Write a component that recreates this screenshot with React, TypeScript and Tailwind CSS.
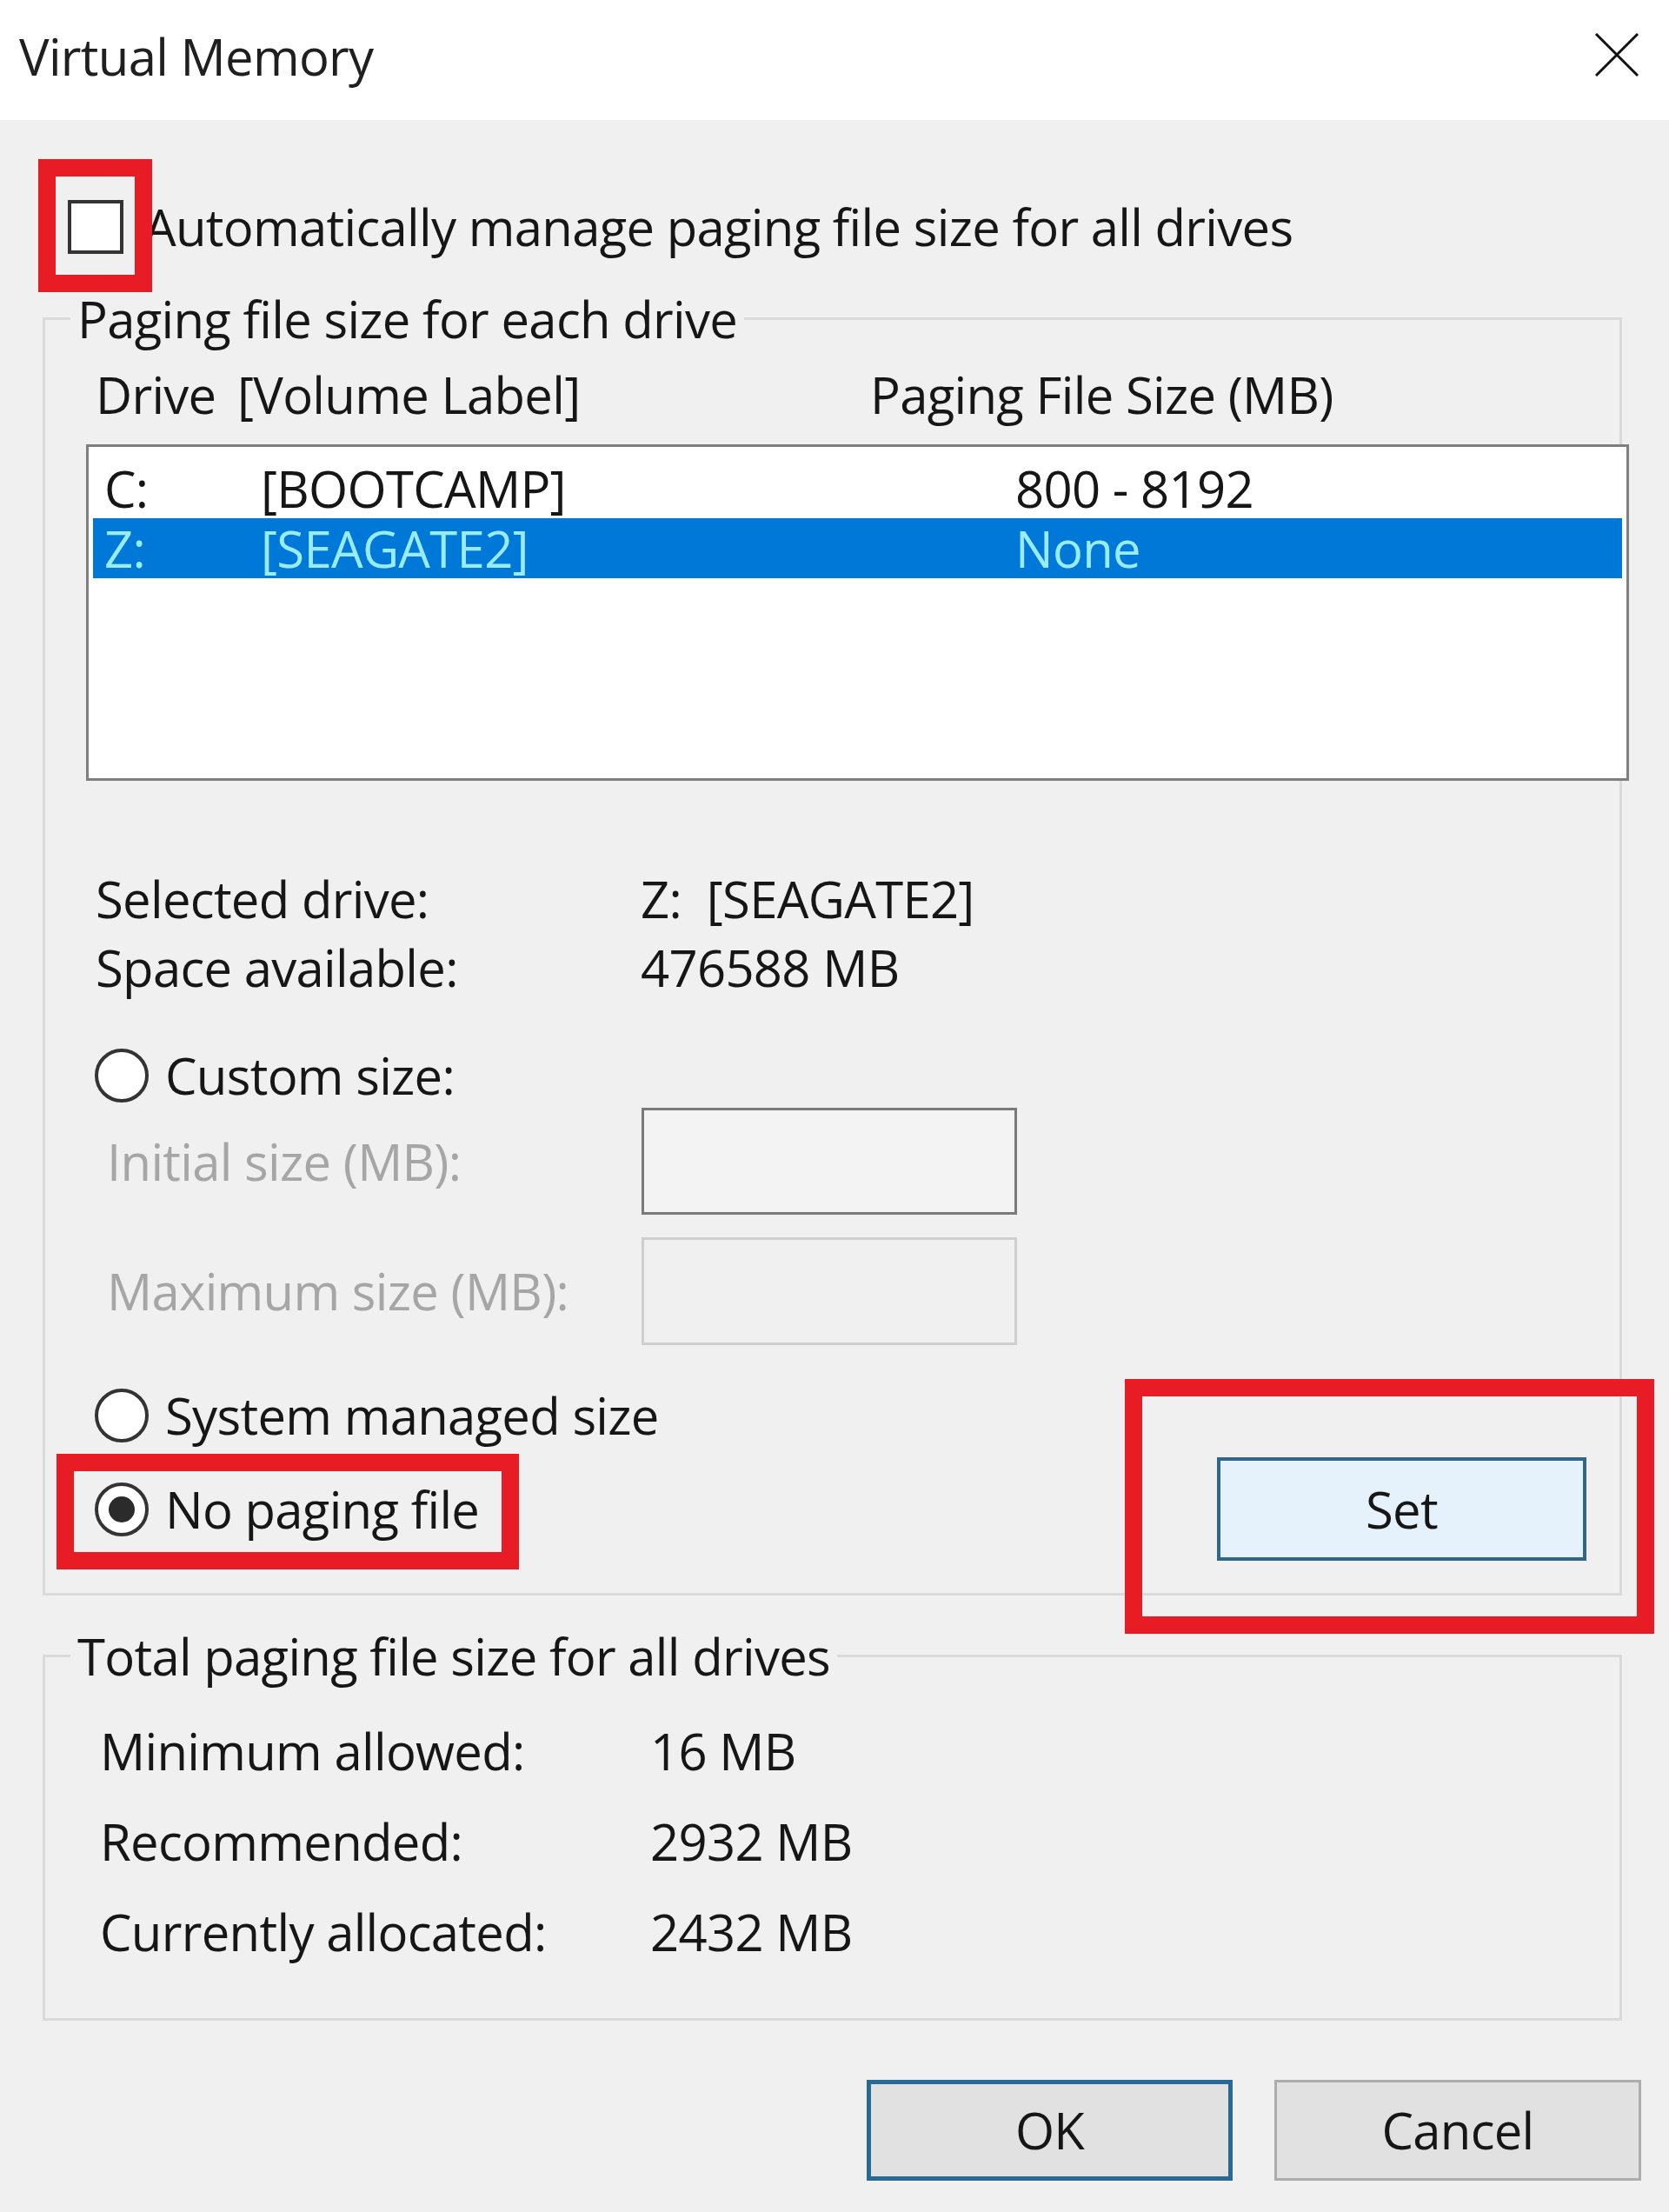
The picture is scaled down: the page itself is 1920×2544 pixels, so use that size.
import React from "react";

function Radio({ checked }: { checked?: boolean }) {
  return (
    <div className="w-[62px] h-[62px] rounded-full border-[4px] border-[#333333] bg-white flex items-center justify-center shrink-0">
      {checked && <div className="w-[30px] h-[30px] rounded-full bg-[#2b2b2b]" />}
    </div>
  );
}

function GroupTitle({ children }: { children: React.ReactNode }) {
  return (
    <div className="mt-[-33px] ml-[29px] px-[8px] w-fit h-[64px] leading-[64px] bg-[#f0f0f0]">{children}</div>
  );
}

export default function App() {
  return (
    <div className="w-[1920px] h-[2544px] overflow-hidden bg-[#f0f0f0] text-[#161616] font-['Segoe_UI','Open_Sans',sans-serif] text-[58px] leading-[64px] tracking-[-0.012em]">
      {/* Title bar */}
      <div className="h-[138px] bg-white flex items-center justify-between pl-[22px] pr-[34px]">
        <span className="text-[58px] text-[#1f1f1f] pb-[8px]">Virtual Memory</span>
        <svg width="52" height="52" viewBox="0 0 52 52" className="mb-[12px]">
          <path d="M2 2 L50 50 M50 2 L2 50" stroke="#111" strokeWidth="3" fill="none" />
        </svg>
      </div>

      {/* Automatic checkbox */}
      <div className="mt-[92px] h-[62px] flex items-center pl-[78px]">
        <div className="relative shrink-0">
          <div className="w-[64px] h-[62px] bg-white border-[4px] border-[#333333]" />
          <div className="absolute left-[-34px] top-[-47px] w-[131px] h-[153px] border-[20px] border-[#e81c24]" />
        </div>
        <span className="ml-[24px]">Automatically manage paging file size for all drives</span>
      </div>

      {/* Paging file size for each drive */}
      <div className="mt-[73px] ml-[49px] w-[1817px] border-[3px] border-[#dadada] pb-[37px]">
        <GroupTitle>Paging file size for each drive</GroupTitle>

        <div className="mt-[23px] h-[64px] flex items-center pl-[58px]">
          <span className="w-[163px]">Drive</span>
          <span className="w-[728px]">[Volume Label]</span>
          <span>Paging File Size (MB)</span>
        </div>

        <div className="mt-[25px] ml-[47px] w-[1775px] h-[387px] border-[3px] border-[#7f7f7f] bg-white pt-[13px] px-[5px]">
          <div className="h-[69px] flex items-center pl-[13px]">
            <span className="w-[180px]">C:</span>
            <span className="w-[868px]">[BOOTCAMP]</span>
            <span>800 - 8192</span>
          </div>
          <div className="h-[69px] flex items-center pl-[13px] bg-[#0078d7] text-[#98ecf7]">
            <span className="w-[180px]">Z:</span>
            <span className="w-[868px]">[SEAGATE2]</span>
            <span>None</span>
          </div>
        </div>

        <div className="mt-[96px] pl-[58px]">
          <div className="h-[79px] flex items-center">
            <span className="w-[627px]">Selected drive:</span>
            <span>Z:&nbsp;&nbsp;[SEAGATE2]</span>
          </div>
          <div className="h-[79px] flex items-center">
            <span className="w-[627px]">Space available:</span>
            <span>476588 MB</span>
          </div>
        </div>

        <div className="mt-[54px] h-[62px] flex items-center pl-[57px]">
          <Radio />
          <span className="ml-[19px]">Custom size:</span>
        </div>

        <div className="mt-[6px] h-[123px] flex items-center pl-[71px] text-[#a6a6a6]">
          <span className="w-[615px]">Initial size (MB):</span>
          <div className="w-[432px] h-[123px] border-[3px] border-[#7a7a7a] bg-[#f3f3f3]" />
        </div>

        <div className="mt-[26px] h-[124px] flex items-center pl-[71px] text-[#a6a6a6]">
          <span className="w-[615px]">Maximum size (MB):</span>
          <div className="w-[432px] h-[124px] border-[3px] border-[#cfcfcf] bg-[#f0f0f0]" />
        </div>

        <div className="mt-[50px] h-[62px] flex items-center pl-[57px]">
          <Radio />
          <span className="ml-[19px]">System managed size</span>
        </div>

        <div className="mt-[17px] h-[119px] flex items-center justify-between pl-[57px] pr-[38px]">
          <div className="relative flex items-center">
            <Radio checked />
            <span className="ml-[19px]">No paging file</span>
            <div className="absolute left-[-44px] top-[-32px] w-[532px] h-[133px] border-[20px] border-[#e81c24]" />
          </div>
          <div className="relative">
            <button className="w-[425px] h-[119px] bg-[#e5f1fb] border-[4px] border-[#336686] flex items-center justify-center">
              Set
            </button>
            <div className="absolute left-[-106px] top-[-90px] w-[609px] h-[293px] border-[20px] border-[#e81c24]" />
          </div>
        </div>
      </div>

      {/* Total paging file size */}
      <div className="mt-[68px] ml-[49px] w-[1817px] border-[3px] border-[#dadada] pb-[47px]">
        <GroupTitle>Total paging file size for all drives</GroupTitle>
        <div className="mt-[25px] pl-[63px]">
          <div className="h-[104px] flex items-center">
            <span className="w-[633px]">Minimum allowed:</span>
            <span>16 MB</span>
          </div>
          <div className="h-[104px] flex items-center">
            <span className="w-[633px]">Recommended:</span>
            <span>2932 MB</span>
          </div>
          <div className="h-[104px] flex items-center">
            <span className="w-[633px]">Currently allocated:</span>
            <span>2432 MB</span>
          </div>
        </div>
      </div>

      {/* Buttons */}
      <div className="mt-[68px] flex justify-end gap-[48px] pr-[32px]">
        <button className="w-[421px] h-[116px] bg-[#e1e1e1] border-[5px] border-[#2a6896] flex items-center justify-center">
          OK
        </button>
        <button className="w-[422px] h-[116px] bg-[#e1e1e1] border-[3px] border-[#adadad] flex items-center justify-center">
          Cancel
        </button>
      </div>
    </div>
  );
}
